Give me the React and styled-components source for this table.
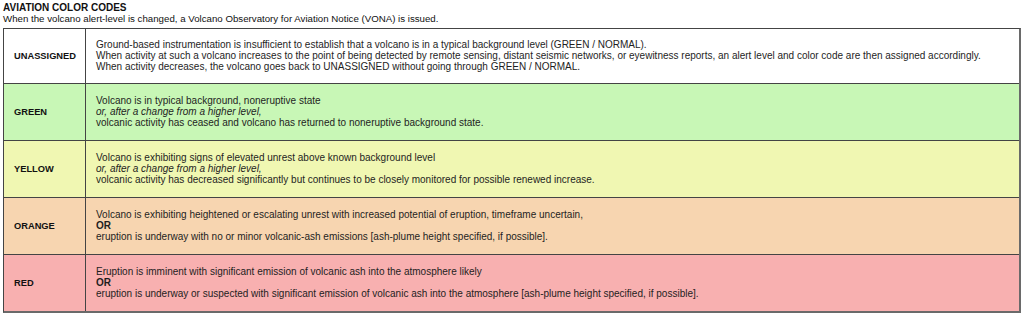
import React from 'react';
import styled, { createGlobalStyle } from 'styled-components';

const GlobalStyle = createGlobalStyle`
  body {
    margin: 0;
    background: #fff;
    font-family: "Liberation Sans", Arial, sans-serif;
    color: #1e1e1e;
  }
`;

const levels = [
  {
    name: 'UNASSIGNED',
    bg: '#ffffff',
    first: true,
    lines: [
      { text: 'Ground-based instrumentation is insufficient to establish that a volcano is in a typical background level (GREEN / NORMAL).' },
      { text: 'When activity at such a volcano increases to the point of being detected by remote sensing, distant seismic networks, or eyewitness reports, an alert level and color code are then assigned accordingly.' },
      { text: 'When activity decreases, the volcano goes back to UNASSIGNED without going through GREEN / NORMAL.' },
    ],
  },
  {
    name: 'GREEN',
    bg: '#c8f7b6',
    lines: [
      { text: 'Volcano is in typical background, noneruptive state' },
      { text: 'or, after a change from a higher level,', kind: 'italic' },
      { text: 'volcanic activity has ceased and volcano has returned to noneruptive background state.' },
    ],
  },
  {
    name: 'YELLOW',
    bg: '#f0f7b2',
    lines: [
      { text: 'Volcano is exhibiting signs of elevated unrest above known background level' },
      { text: 'or, after a change from a higher level,', kind: 'italic' },
      { text: 'volcanic activity has decreased significantly but continues to be closely monitored for possible renewed increase.' },
    ],
  },
  {
    name: 'ORANGE',
    bg: '#f7d5b0',
    lines: [
      { text: 'Volcano is exhibiting heightened or escalating unrest with increased potential of eruption, timeframe uncertain,' },
      { text: 'OR', kind: 'bold' },
      { text: 'eruption is underway with no or minor volcanic-ash emissions [ash-plume height specified, if possible].' },
    ],
  },
  {
    name: 'RED',
    bg: '#f8b0b0',
    lines: [
      { text: 'Eruption is imminent with significant emission of volcanic ash into the atmosphere likely' },
      { text: 'OR', kind: 'bold' },
      { text: 'eruption is underway or suspected with significant emission of volcanic ash into the atmosphere [ash-plume height specified, if possible].' },
    ],
  },
];

const AviationCodes = () => {
  return (
    <Page>
      <GlobalStyle />
      <Title>AVIATION COLOR CODES</Title>
      <Intro>When the volcano alert-level is changed, a Volcano Observatory for Aviation Notice (VONA) is issued.</Intro>
      <Table>
        {levels.map((level) => (
          <Row key={level.name} $bg={level.bg} $first={level.first}>
            <Label>{level.name}</Label>
            <Desc>
              {level.lines.map((line, i) => (
                <Line key={i} $kind={line.kind}>{line.text}</Line>
              ))}
            </Desc>
          </Row>
        ))}
      </Table>
    </Page>
  );
};

const Page = styled.div`
  padding: 2px 3px 0 3px;
`;

const Title = styled.h1`
  margin: 0;
  font-size: 10px;
  line-height: 11px;
  font-weight: bold;
  color: #111;
`;

const Intro = styled.p`
  margin: 0 0 3px;
  font-size: 9.7px;
  line-height: 12px;
  color: #111;
`;

const Table = styled.div`
  display: flex;
  flex-direction: column;
  width: 1015px;
  border: 1px solid #444;
  border-right: 2px solid #6a6a6a;
  border-bottom: 2px solid #6a6a6a;
`;

const Row = styled.div`
  display: grid;
  grid-template-columns: 82px 1fr;
  height: ${(p) => (p.$first ? '54px' : '56px')};
  background: ${(p) => p.$bg};
  border-top: ${(p) => (p.$first ? 'none' : '1px solid #444')};
`;

const Label = styled.div`
  display: flex;
  align-items: center;
  padding-left: 10px;
  border-right: 1px solid #444;
  font-size: 9.3px;
  font-weight: bold;
  color: #111;
`;

const Desc = styled.div`
  display: flex;
  flex-direction: column;
  justify-content: center;
  padding: 0 0 1px 10px;
`;

const Line = styled.div`
  font-size: 10px;
  line-height: 11px;
  color: #1e1e1e;
  font-style: ${(p) => (p.$kind === 'italic' ? 'italic' : 'normal')};
  font-weight: ${(p) => (p.$kind === 'bold' ? 'bold' : 'normal')};
  white-space: nowrap;
`;

export default AviationCodes;
